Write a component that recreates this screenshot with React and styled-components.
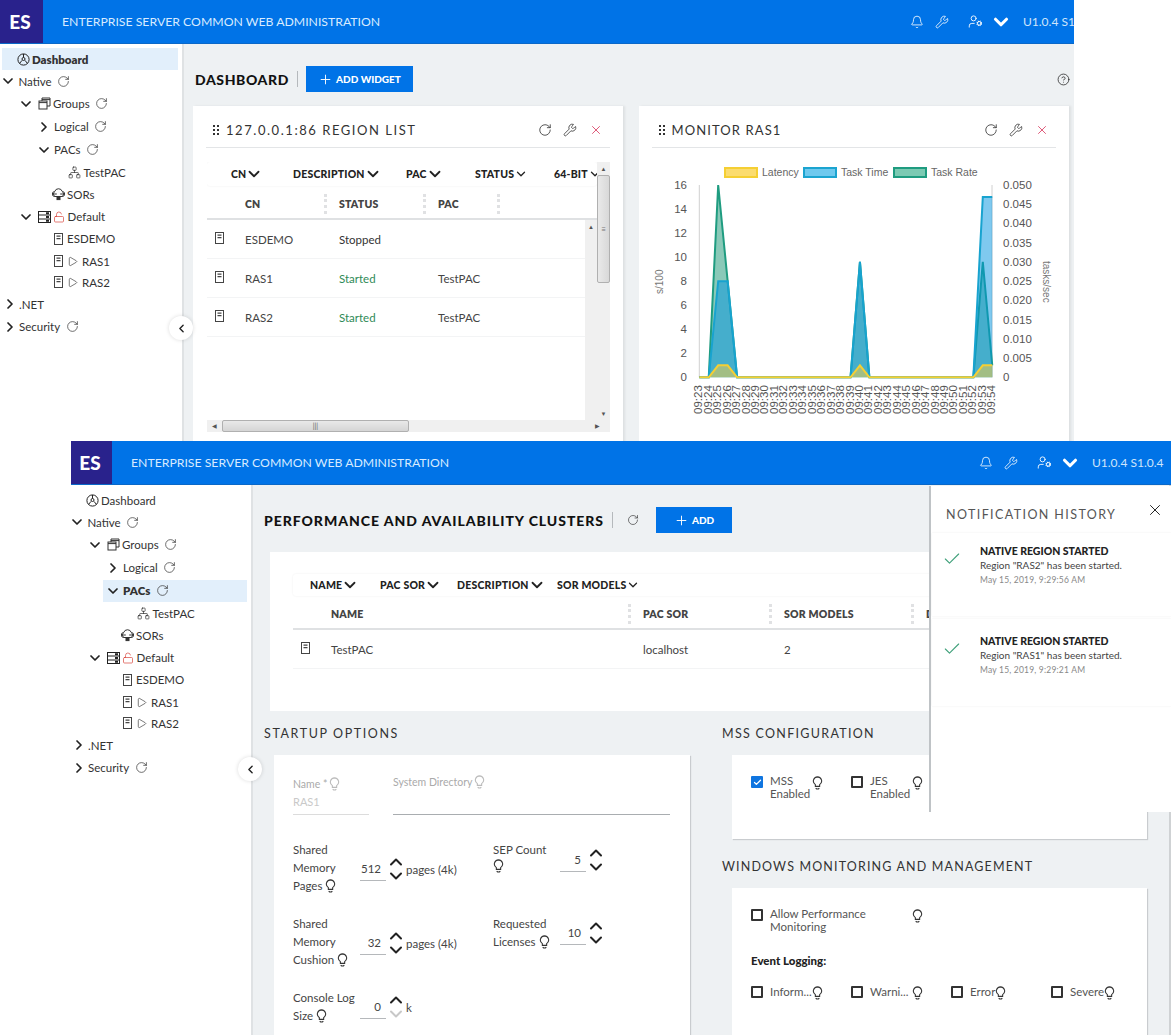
import React from "react";
import styled, { createGlobalStyle } from "styled-components";
import {
  Bell,
  Check,
  ChevronDown,
  ChevronLeft,
  ChevronRight,
  ChevronUp,
  CircleHelp,
  LockOpen,
  Network,
  Play,
  Plus,
  RotateCw,
  UserCog,
  Wrench,
  X
} from "lucide-react";

const GlobalStyle = createGlobalStyle`
  html, body {
    margin: 0;
    background: #fff;
    overflow: hidden;
  }
  body {
    font-family: "Lato", "Open Sans", sans-serif;
    color: #333;
  }
`;

const Page = styled.div`
  width: 1171px;
  height: 1035px;
  overflow: hidden;
`;

const Shot = styled.section`
  width: ${p => p.$width}px;
  height: ${p => p.$height}px;
  margin-left: ${p => p.$left}px;
  overflow: hidden;
  display: flex;
  flex-direction: column;
  position: relative;
`;

const TopBar = styled.header`
  flex: 0 0 44px;
  display: flex;
  align-items: center;
  background: #0073e7;
  border-bottom: 1px solid #0a68c8;
  box-sizing: border-box;
  color: #d8ebff;
  white-space: nowrap;
`;

const Logo = styled.div`
  flex: 0 0 ${p => p.$width}px;
  box-sizing: border-box;
  padding-right: 3px;
  height: 100%;
  display: flex;
  align-items: center;
  justify-content: center;
  background: #29228c;
  color: #fff;
  font-weight: 900;
  font-size: 19px;
`;

const AppTitle = styled.div`
  flex: 0 0 867px;
  box-sizing: border-box;
  padding-left: 19px;
  font-size: 12.25px;
`;

const BarIcons = styled.div`
  display: flex;
  align-items: center;
  color: #fff;
`;

const BarIcon = styled.span`
  display: flex;
  width: ${p => p.$width}px;
`;

const BarChevron = styled(ChevronDown)`
  margin-left: -3px;
  flex: none;
`;

const Version = styled.span`
  font-size: 12px;
  margin-left: 16px;
  color: #cfe5fb;
`;

const Body = styled.div`
  flex: 1;
  display: flex;
  min-height: 0;
  margin-left: ${p => p.$shift || 0}px;
`;

const Sidebar = styled.nav`
  flex: 0 0 184px;
  box-sizing: border-box;
  padding-top: 4px;
  background: #fff;
  border-right: 2px solid #dfe2e4;
  position: relative;
  z-index: 2;
`;

const TreeRow = styled.div`
  height: 22.3px;
  width: ${p => 178 - p.$x}px;
  margin-left: ${p => p.$x}px;
  margin-top: ${p => p.$nudge || 0}px;
  padding-left: ${p => p.$pad || 0}px;
  box-sizing: border-box;
  display: flex;
  align-items: center;
  gap: ${p => p.$gap || 2.5}px;
  font-size: 11.5px;
  color: #333;
  font-weight: ${p => (p.$bold ? 800 : 400)};
  background: ${p => (p.$active ? "#e2effb" : "transparent")};
  svg {
    flex: none;
  }
`;

const Refresh = styled(RotateCw).attrs({ size: 13, strokeWidth: 1.3, color: "#333" })`
  margin-left: 3px;
`;

const TreeDown = styled(ChevronDown).attrs({ size: 16, strokeWidth: 2.6, color: "#222" })`
  margin: 0 ${p => p.$after || 0}px 0 -2px;
`;

const TreeRight = styled(ChevronRight).attrs({ size: 16, strokeWidth: 2.6, color: "#222" })`
  margin: 0 ${p => p.$after || 0}px 0 -2px;
`;

const CollapseButton = styled.button`
  position: absolute;
  left: 169px;
  top: 272px;
  width: 24px;
  height: 24px;
  border: 0;
  padding: 0;
  border-radius: 50%;
  background: #fff;
  box-shadow: 0 0 4px rgba(0, 0, 0, 0.14);
  display: flex;
  align-items: center;
  justify-content: center;
  color: #222;
`;

const Main = styled.main`
  flex: 1;
  min-width: 0;
  box-sizing: border-box;
  background: #eef1f3;
  overflow: hidden;
  padding: 22px 6px 0 ${p => p.$pad}px;
  border-right: ${p => (p.$edge ? "2px solid #cfd2d4" : "0")};
`;

const PageHead = styled.div`
  height: 26px;
  display: flex;
  align-items: center;
  margin-left: ${p => p.$inset || 0}px;
  color: #333;
`;

const PageTitle = styled.h1`
  margin: 0;
  font-size: 14px;
  font-weight: 900;
  letter-spacing: ${p => p.$spacing}px;
  color: #111;
  white-space: nowrap;
`;

const HeadRule = styled.span`
  width: 1px;
  height: 16px;
  background: #b5b9bc;
  margin: 0 8px;
`;

const HeadRefresh = styled(RotateCw).attrs({ size: 12, strokeWidth: 1.3 })`
  margin-left: 6px;
`;

const PrimaryButton = styled.button`
  height: 26px;
  width: ${p => p.$width}px;
  margin-left: ${p => p.$gap || 0}px;
  border: 0;
  padding: 0;
  background: #0073e7;
  color: #fff;
  font-family: inherit;
  font-size: 10px;
  font-weight: 900;
  display: flex;
  align-items: center;
  justify-content: center;
  gap: 3px;
`;

const HelpSpot = styled.span`
  margin-left: auto;
  margin-right: -2px;
  display: flex;
  color: #222;
`;

const WidgetGrid = styled.div`
  display: flex;
  gap: 16px;
  margin-top: 14px;
`;

const Widget = styled.article`
  flex: 0 0 429.5px;
  height: 340px;
  background: #fff;
  box-shadow: 2px 0 2px #dde0e2;
`;

const WidgetHead = styled.div`
  height: 42px;
  margin: 0 13px;
  padding: 6px 7px 0 7px;
  box-sizing: border-box;
  display: flex;
  align-items: center;
  border-bottom: 1px solid #e3e5e7;
`;

const WidgetTitle = styled.h2`
  margin: 0 0 0 7px;
  font-size: 13px;
  font-weight: 400;
  letter-spacing: ${p => p.$spacing}px;
  color: #333;
  white-space: nowrap;
`;

const WidgetTools = styled.div`
  margin-left: auto;
  display: flex;
  align-items: center;
  gap: 11.5px;
  color: #333;
  svg:last-child {
    color: #d8365c;
  }
`;

const TableShell = styled.div`
  margin: 14px 0 0 14px;
  width: 403px;
`;

const TableTop = styled.div`
  display: flex;
`;

const TablePane = styled.div`
  flex: 0 0 390px;
  overflow: hidden;
`;

const Filters = styled.div`
  height: ${p => p.$height}px;
  display: flex;
  align-items: center;
  box-sizing: border-box;
  padding-left: ${p => p.$pad}px;
  border-radius: 3px;
  box-shadow: 0 0 2px rgba(0, 0, 0, 0.08);
  white-space: nowrap;
`;

const Filter = styled.span`
  flex: 0 0 ${p => p.$width}px;
  display: flex;
  align-items: center;
  gap: 2px;
  font-size: 10.5px;
  font-weight: 900;
  color: #222;
  letter-spacing: 0.2px;
`;

const FilterBig = styled(ChevronDown).attrs({ size: 18, strokeWidth: 2.4, color: "#222" })`
  margin: 0 -3px;
  flex: none;
`;

const FilterSmall = styled(ChevronDown).attrs({ size: 14, strokeWidth: 2.2, color: "#222" })`
  margin: 0 -2px;
  flex: none;
`;

const HeadRow = styled.div`
  display: grid;
  grid-template-columns: ${p => p.$cols};
  height: ${p => p.$height}px;
  align-items: center;
  margin-top: ${p => p.$top || 0}px;
  padding-bottom: ${p => p.$lift || 0}px;
  border-bottom: 2px solid #dfe1e3;
  box-sizing: border-box;
  white-space: nowrap;
`;

const HeadCell = styled.div`
  display: flex;
  align-items: center;
  justify-content: space-between;
  padding-right: 12px;
  font-size: 10.5px;
  font-weight: 800;
  color: #444;
  letter-spacing: 0.2px;
`;

const ColGrip = styled.span`
  height: 20px;
  border-left: 3px dotted #e0e1e3;
`;

const RowsArea = styled.div`
  display: flex;
  height: 200px;
`;

const Rows = styled.div`
  flex: 1;
  min-width: 0;
`;

const DataRow = styled.div`
  display: grid;
  grid-template-columns: ${p => p.$cols};
  height: 39px;
  align-items: center;
  border-bottom: 1px solid #f3f4f5;
  box-sizing: border-box;
  font-size: 11.5px;
  color: #444;
  white-space: nowrap;
`;

const RowIcon = styled.span`
  display: flex;
  padding-left: 8px;
  margin-top: -2px;
`;

const Status = styled.span`
  color: ${p => (p.$on ? "#2f8a57" : "#333")};
`;

const VScroll = styled.div`
  flex: 0 0 ${p => p.$width}px;
  display: flex;
  flex-direction: column;
  align-items: center;
  height: ${p => p.$height}px;
  background: #f0f0f0;
  color: #555;
`;

const HScroll = styled.div`
  height: 12px;
  display: flex;
  align-items: center;
  background: #f0f0f0;
  color: #555;
`;

const Arrow = styled.span`
  flex: 0 0 ${p => p.$size || 13}px;
  display: flex;
  align-items: center;
  justify-content: center;
  font-size: 6px;
  line-height: 1;
  margin-top: ${p => (p.$end ? "auto" : "0")};
  margin-left: ${p => (p.$endX ? "auto" : "0")};
`;

const ThumbV = styled.div`
  width: 100%;
  height: ${p => p.$height}px;
  box-sizing: border-box;
  border: 1px solid #b0b0b0;
  border-radius: 2px;
  background: linear-gradient(90deg, #e9e9e9, #d8d8d8);
  display: flex;
  align-items: center;
  justify-content: center;
  font-size: 8px;
  color: #777;
`;

const ThumbH = styled.div`
  width: ${p => p.$width}px;
  height: 100%;
  box-sizing: border-box;
  border: 1px solid #b0b0b0;
  border-radius: 2px;
  background: linear-gradient(#e9e9e9, #d5d5d5);
  display: flex;
  align-items: center;
  justify-content: center;
  font-size: 7px;
  color: #555;
`;

const ChartSvg = styled.svg`
  display: block;
  font-family: "Liberation Sans", Arial, sans-serif;
`;

const ClusterCard = styled.div`
  height: 159px;
  margin: 19px 19px 0 6px;
  padding: 22px 0 0 23px;
  box-sizing: border-box;
  background: #fff;
  overflow: hidden;
`;

const SectionGrid = styled.div`
  display: grid;
  grid-template-columns: 426px 425px;
  column-gap: 32px;
  margin-top: 15px;
`;

const SectionColumn = styled.div`
  min-width: 0;
`;

const SectionTitle = styled.h3`
  margin: ${p => p.$top || 0}px 0 13px;
  height: 16px;
  line-height: 16px;
  font-size: 12.5px;
  font-weight: 400;
  letter-spacing: ${p => p.$spacing}px;
  color: #333;
  white-space: nowrap;
`;

const FormCard = styled.div`
  margin-left: 10px;
  height: ${p => p.$height}px;
  box-sizing: border-box;
  padding: ${p => p.$padTop}px 0 0 19px;
  background: #fff;
  box-shadow: 1px 1px 1px #c9cccf;
`;

const TextRow = styled.div`
  display: flex;
  height: 37px;
  gap: 24px;
`;

const TextField = styled.div`
  width: ${p => p.$width}px;
  height: 100%;
  display: flex;
  flex-direction: column;
  border-bottom: 1px solid ${p => (p.$muted ? "#dcdcdc" : "#a9adb0")};
  box-sizing: border-box;
`;

const FieldLabel = styled.span`
  display: flex;
  align-items: center;
  gap: 2px;
  font-size: 10.5px;
  color: #aaa;
  height: 14px;
  margin-top: ${p => p.$top || 0}px;
  white-space: nowrap;
`;

const FieldValue = styled.span`
  font-size: 11px;
  color: #c9c9c9;
  margin-top: 4px;
`;

const NumGrid = styled.div`
  display: grid;
  grid-template-columns: 200px 1fr;
  grid-auto-rows: 74px;
  margin-top: 26px;
`;

const NumField = styled.div`
  display: flex;
  align-items: flex-start;
`;

const NumLabel = styled.div`
  flex: 0 0 67px;
  font-size: 11.5px;
  line-height: 18px;
  color: #444;
`;

const BulbLine = styled.span`
  display: inline-flex;
  align-items: center;
  gap: 3px;
`;

const NumControl = styled.div`
  display: flex;
  align-items: center;
  height: 28px;
  margin-top: ${p => p.$top}px;
  font-size: 11.5px;
  color: #444;
  white-space: nowrap;
`;

const NumInput = styled.span`
  width: 26px;
  height: 24px;
  line-height: 24px;
  box-sizing: border-box;
  padding-right: 5px;
  text-align: right;
  border-bottom: 1px solid #b5b8bb;
`;

const Spinner = styled.span`
  display: flex;
  flex-direction: column;
  align-items: center;
  margin: 0 3px;
  width: 14px;
  color: #222;
  svg {
    margin: -3px;
    flex: none;
  }
  svg:last-child {
    color: ${p => (p.$floor ? "#c8c8c8" : "#222")};
  }
`;

const CheckGrid = styled.div`
  display: grid;
  grid-template-columns: repeat(4, 100px);
`;

const CheckItem = styled.div`
  display: flex;
  align-items: flex-start;
  grid-column: span ${p => p.$span || 1};
  margin-bottom: ${p => p.$bottom || 0}px;
  font-size: 11.5px;
  line-height: 13px;
  color: #555;
`;

const Box = styled.span`
  flex: 0 0 12px;
  height: 12px;
  box-sizing: border-box;
  border: ${p => (p.$checked ? "0" : "2px solid #333")};
  border-radius: 1px;
  background: ${p => (p.$checked ? "#0f75e0" : "#fff")};
  display: flex;
  align-items: center;
  justify-content: center;
  color: #fff;
  margin-right: 7px;
`;

const CheckText = styled.span`
  flex: 0 0 ${p => p.$width}px;
  margin-top: ${p => p.$raise || -2}px;
  white-space: ${p => (p.$wrap ? "normal" : "nowrap")};
`;

const EventTitle = styled.div`
  font-size: 11.5px;
  font-weight: 900;
  color: #222;
  margin: 0 0 19px;
`;

const Panel = styled.aside`
  position: absolute;
  left: 858px;
  top: 45px;
  width: 242px;
  height: 326px;
  box-sizing: border-box;
  background: #fff;
  border-left: 2px solid #bfc3c6;
  z-index: 3;
`;

const PanelHead = styled.div`
  height: 47px;
  display: flex;
  align-items: center;
  padding: 0 7px 0 15px;
  justify-content: space-between;
  color: #222;
`;

const PanelTitle = styled.h4`
  margin: 10px 0 0;
  font-size: 12.5px;
  font-weight: 400;
  letter-spacing: 1.4px;
  color: #555;
`;

const Notice = styled.div`
  height: ${p => p.$height}px;
  display: flex;
  box-sizing: border-box;
  padding: ${p => p.$padTop}px 0 0 10px;
  margin: 0 0 3px 1px;
  box-shadow: 0 0 2px rgba(0, 0, 0, 0.07);
`;

const NoticeMark = styled.span`
  flex: 0 0 38px;
  color: #3fa07a;
  padding-top: 5px;
`;

const NoticeTitle = styled.div`
  font-size: 10.5px;
  font-weight: 900;
  color: #222;
  line-height: 14px;
`;

const NoticeText = styled.div`
  font-size: 10px;
  color: #444;
  line-height: 14px;
`;

const NoticeDate = styled.div`
  font-size: 8.5px;
  color: #888;
  line-height: 17px;
  letter-spacing: 0.2px;
`;

const Bulb = ({ muted }) => (
  <svg width="11" height="14" viewBox="0 0 10 13" fill="none" stroke={muted ? "#bbb" : "#333"} strokeWidth="1">
    <path d="M5 .8a3.9 3.9 0 0 0-2 7.2v1.6h4V8A3.9 3.9 0 0 0 5 .8zM3.3 11.4c1 .8 2.4.8 3.4 0" />
  </svg>
);

const DashboardIcon = () => (
  <svg width="13" height="13" viewBox="0 0 13 13" fill="none" stroke="#222" strokeWidth="1">
    <circle cx="6.5" cy="6.5" r="5.6" />
    <circle cx="6.5" cy="6" r="1.5" />
    <path d="M6.5 1v3.5M2.5 10.5L5 7.4M10.5 10.5L8 7.4" />
  </svg>
);

const GroupsIcon = () => (
  <svg width="13" height="13" viewBox="0 0 13 13" fill="none" stroke="#333" strokeWidth="1">
    <rect x="1" y="4" width="8" height="8" fill="#fff" />
    <path d="M1 5.6h8M4 4V1h8v8H9M4 2.6h8" />
  </svg>
);

const SorIcon = () => (
  <svg width="13" height="13" viewBox="0 0 13 13" fill="none" stroke="#333" strokeWidth="1">
    <path d="M3 8.5a2.5 2.5 0 0 1-.3-5 4 4 0 0 1 7.6 0 2.5 2.5 0 0 1-.3 5zM.8 6h4M2.5 4.4L.8 6l1.7 1.6M12.2 6h-4M10.5 4.4L12.2 6l-1.7 1.6" />
    <rect x="5" y="9" width="3" height="2.6" fill="#333" />
  </svg>
);

const ServerListIcon = () => (
  <svg width="13" height="12" viewBox="0 0 13 12" fill="none" stroke="#222" strokeWidth="1">
    <rect x=".5" y=".5" width="12" height="11" />
    <path d="M.5 4h12M.5 8h12" />
    <path d="M8 2.2h3M8 6h3M8 9.8h3" strokeWidth="2" />
  </svg>
);

const RegionIcon = () => (
  <svg width="9" height="12" viewBox="0 0 9 12" fill="none" stroke="#444" strokeWidth="1">
    <rect x=".5" y=".5" width="8" height="11" />
    <path d="M2.5 3.2h4M2.5 5.6h4" strokeWidth="1.2" />
  </svg>
);

const Grip = () => (
  <svg width="6" height="10" viewBox="0 0 6 10" fill="#333">
    <rect x="0" y="0" width="2" height="2" />
    <rect x="4" y="0" width="2" height="2" />
    <rect x="0" y="4" width="2" height="2" />
    <rect x="4" y="4" width="2" height="2" />
    <rect x="0" y="8" width="2" height="2" />
    <rect x="4" y="8" width="2" height="2" />
  </svg>
);

const RedLock = () => <LockOpen size={12} strokeWidth={1.4} color="#d8453c" />;
const PlayMark = () => <Play size={11} strokeWidth={1.3} color="#222" />;

const Tree = ({ active }) => (
  <>
    <TreeRow $x={2} $pad={15} $gap={2} $active={active === "Dashboard"} $bold={active === "Dashboard"}>
      <DashboardIcon /> Dashboard
    </TreeRow>
    <TreeRow $x={2}>
      <TreeDown /> Native <Refresh />
    </TreeRow>
    <TreeRow $x={20}>
      <TreeDown $after={1} /> <GroupsIcon /> Groups <Refresh />
    </TreeRow>
    <TreeRow $x={38} $nudge={0.7}>
      <TreeRight $after={-0.5} /> Logical <Refresh />
    </TreeRow>
    <TreeRow $x={34} $pad={4} $nudge={0.7} $active={active === "PACs"} $bold={active === "PACs"}>
      <TreeDown $after={-0.5} /> PACs <Refresh />
    </TreeRow>
    <TreeRow $x={68}>
      <Network size={13} strokeWidth={1.2} color="#222" /> TestPAC
    </TreeRow>
    <TreeRow $x={52} $gap={2}>
      <SorIcon /> SORs
    </TreeRow>
    <TreeRow $x={20}>
      <TreeDown $after={1} /> <ServerListIcon /> <RedLock /> Default
    </TreeRow>
    <TreeRow $x={54} $gap={4}>
      <RegionIcon /> ESDEMO
    </TreeRow>
    <TreeRow $x={54} $gap={4}>
      <RegionIcon /> <PlayMark /> RAS1
    </TreeRow>
    <TreeRow $x={54} $gap={4} $nudge={-1.4}>
      <RegionIcon /> <PlayMark /> RAS2
    </TreeRow>
    <TreeRow $x={4} $gap={3}>
      <TreeRight $after={-2} /> .NET
    </TreeRow>
    <TreeRow $x={4} $gap={3}>
      <TreeRight $after={-2} /> Security <Refresh />
    </TreeRow>
  </>
);

const Header = ({ logoWidth }) => (
  <TopBar>
    <Logo $width={logoWidth}>ES</Logo>
    <AppTitle>ENTERPRISE SERVER COMMON WEB ADMINISTRATION</AppTitle>
    <BarIcons>
      <BarIcon $width={25}>
        <Bell size={14} strokeWidth={1.4} />
      </BarIcon>
      <BarIcon $width={33}>
        <Wrench size={14} strokeWidth={1.4} />
      </BarIcon>
      <BarIcon $width={25}>
        <UserCog size={15} strokeWidth={1.4} />
      </BarIcon>
      <BarIcon $width={14}>
        <BarChevron size={22} strokeWidth={3.4} />
      </BarIcon>
      <Version>U1.0.4 S1.0.4</Version>
    </BarIcons>
  </TopBar>
);

const regionCols = "38px 94px 99px 74px";
const regions = [
  { cn: "ESDEMO", status: "Stopped", pac: "" },
  { cn: "RAS1", status: "Started", pac: "TestPAC" },
  { cn: "RAS2", status: "Started", pac: "TestPAC" }
];

const RegionList = () => (
  <TableShell>
    <TableTop>
      <TablePane>
        <Filters $height={24} $pad={24}>
          <Filter $width={62}>CN <FilterBig /></Filter>
          <Filter $width={113}>DESCRIPTION <FilterBig /></Filter>
          <Filter $width={69}>PAC <FilterBig /></Filter>
          <Filter $width={79}>STATUS <FilterSmall /></Filter>
          <Filter $width={60}>64-BIT <FilterSmall /></Filter>
        </Filters>
        <HeadRow $cols={regionCols} $height={28} $top={6} $lift={2}>
          <span />
          <HeadCell>CN <ColGrip /></HeadCell>
          <HeadCell>STATUS <ColGrip /></HeadCell>
          <HeadCell>PAC <ColGrip /></HeadCell>
        </HeadRow>
        <RowsArea>
          <Rows>
            {regions.map(r => (
              <DataRow key={r.cn} $cols={regionCols}>
                <RowIcon><RegionIcon /></RowIcon>
                <span>{r.cn}</span>
                <Status $on={r.status === "Started"}>{r.status}</Status>
                <span>{r.pac}</span>
              </DataRow>
            ))}
          </Rows>
          <VScroll $width={12} $height={200}>
            <Arrow>▲</Arrow>
          </VScroll>
        </RowsArea>
      </TablePane>
      <VScroll $width={13} $height={258}>
        <Arrow>▲</Arrow>
        <ThumbV $height={108}>≡</ThumbV>
        <Arrow $end>▼</Arrow>
      </VScroll>
    </TableTop>
    <HScroll>
      <Arrow $size={15}>◀</Arrow>
      <ThumbH $width={187}>|||</ThumbH>
      <Arrow $endX $size={26}>▶</Arrow>
    </HScroll>
  </TableShell>
);

const X0 = 699.3;
const XSTEP = 9.45;
const Y0 = 378.3;
const UNIT = 12.02;
const px = i => X0 + i * XSTEP;
const py = v => Y0 - v * UNIT;

const series = peaks =>
  Array.from({ length: 32 }, (_, i) => (peaks[i] === undefined ? 0 : peaks[i]));

const linePoints = values => values.map((v, i) => `${px(i)},${py(v)}`).join(" ");
const areaPoints = values => `${px(0)},${Y0} ${linePoints(values)} ${px(31)},${Y0}`;

const taskRate = series({ 2: 16, 3: 8, 17: 9.6, 30: 9.6, 31: 1 });
const taskTime = series({ 2: 8, 3: 8, 17: 9.6, 30: 15, 31: 15 });
const latency = series({ 2: 1, 3: 1, 17: 1, 30: 1, 31: 1 });

const legend = [
  { x: 724, label: "Latency", stroke: "#f5cf33", fill: "#fbdc6f" },
  { x: 803, label: "Task Time", stroke: "#1ba4d0", fill: "#6fc9ee" },
  { x: 893, label: "Task Rate", stroke: "#1f9c80", fill: "#7ccab3" }
];
const leftTicks = [0, 2, 4, 6, 8, 10, 12, 14, 16];
const rightTicks = ["0", "0.005", "0.010", "0.015", "0.020", "0.025", "0.030", "0.035", "0.040", "0.045", "0.050"];
const times = Array.from({ length: 32 }, (_, i) => `09:${i + 23}`);

const MonitorChart = () => (
  <ChartSvg width="430" height="290" viewBox="639 149 430 290">
    {legend.map(l => (
      <g key={l.label}>
        <rect x={l.x + 1} y="169" width="32" height="9" fill={l.fill} stroke={l.stroke} strokeWidth="2" />
        <text x={l.x + 38} y="176.5" fontSize="10.5" fill="#666">{l.label}</text>
      </g>
    ))}
    <path d={`M${X0} 186V${Y0}M992 186V${Y0}`} stroke="#d0d0d0" strokeWidth="1" />
    <polygon points={areaPoints(taskRate)} fill="rgba(42,157,125,0.55)" />
    <polyline points={linePoints(taskRate)} fill="none" stroke="#1f9c80" strokeWidth="2" />
    <polygon points={areaPoints(taskTime)} fill="rgba(0,147,223,0.5)" />
    <polyline points={linePoints(taskTime)} fill="none" stroke="#18a3cf" strokeWidth="2" />
    <polygon points={areaPoints(latency)} fill="rgba(255,205,60,0.5)" />
    <polyline points={linePoints(latency)} fill="none" stroke="#f5cf33" strokeWidth="2" />
    {leftTicks.map(t => (
      <text key={t} x="687" y={py(t) + 4} textAnchor="end" fontSize="11.5" fill="#555">{t}</text>
    ))}
    {rightTicks.map((t, i) => (
      <text key={t} x="1003" y={Y0 - i * 19.25 + 4} fontSize="11.5" fill="#555">{t}</text>
    ))}
    {times.map((t, i) => (
      <text key={t} transform={`translate(${px(i) + 3} 415) rotate(-90)`} fontSize="11.5" fill="#555">{t}</text>
    ))}
    <text transform="translate(663 295) rotate(-90)" fontSize="10" fill="#777">s/100</text>
    <text transform="translate(1043 262) rotate(90)" fontSize="10" fill="#777">tasks/sec</text>
  </ChartSvg>
);

const WidgetActions = () => (
  <WidgetTools>
    <RotateCw size={14} strokeWidth={1.4} />
    <Wrench size={14} strokeWidth={1.4} />
    <X size={14} strokeWidth={1.4} />
  </WidgetTools>
);

const DashboardShot = () => (
  <Shot $width={1074} $height={441} $left={0}>
    <Header logoWidth={43} />
    <Body>
      <Sidebar>
        <Tree active="Dashboard" />
        <CollapseButton><ChevronLeft size={13} strokeWidth={2.6} /></CollapseButton>
      </Sidebar>
      <Main $pad={9}>
        <PageHead $inset={2}>
          <PageTitle $spacing={0.6}>DASHBOARD</PageTitle>
          <HeadRule />
          <PrimaryButton $width={107}>
            <Plus size={15} strokeWidth={1.5} /> ADD WIDGET
          </PrimaryButton>
          <HelpSpot><CircleHelp size={13} strokeWidth={1.4} /></HelpSpot>
        </PageHead>
        <WidgetGrid>
          <Widget>
            <WidgetHead>
              <Grip />
              <WidgetTitle $spacing={1.55}>127.0.0.1:86 REGION LIST</WidgetTitle>
              <WidgetActions />
            </WidgetHead>
            <RegionList />
          </Widget>
          <Widget>
            <WidgetHead>
              <Grip />
              <WidgetTitle $spacing={1.1}>MONITOR RAS1</WidgetTitle>
              <WidgetActions />
            </WidgetHead>
            <MonitorChart />
          </Widget>
        </WidgetGrid>
      </Main>
    </Body>
  </Shot>
);

const clusterCols = "38px 312px 141px 142px 100px";

const ClusterTable = () => (
  <ClusterCard>
    <Filters $height={22} $pad={17}>
      <Filter $width={70}>NAME <FilterBig /></Filter>
      <Filter $width={77}>PAC SOR <FilterBig /></Filter>
      <Filter $width={100}>DESCRIPTION <FilterBig /></Filter>
      <Filter $width={100}>SOR MODELS <FilterSmall /></Filter>
    </Filters>
    <HeadRow $cols={clusterCols} $height={30} $top={4}>
      <span />
      <HeadCell>NAME <ColGrip /></HeadCell>
      <HeadCell>PAC SOR <ColGrip /></HeadCell>
      <HeadCell>SOR MODELS <ColGrip /></HeadCell>
      <HeadCell>DESCRIPTION</HeadCell>
    </HeadRow>
    <DataRow $cols={clusterCols}>
      <RowIcon><RegionIcon /></RowIcon>
      <span>TestPAC</span>
      <span>localhost</span>
      <span>2</span>
      <span />
    </DataRow>
  </ClusterCard>
);

const Stepper = ({ floor }) => (
  <Spinner $floor={floor}>
    <ChevronUp size={20} strokeWidth={2.4} />
    <ChevronDown size={20} strokeWidth={2.4} />
  </Spinner>
);

const StartupForm = () => (
  <FormCard $height={300} $padTop={23}>
    <TextRow>
      <TextField $width={76} $muted>
        <FieldLabel $top={-1}>Name * <Bulb muted /></FieldLabel>
        <FieldValue>RAS1</FieldValue>
      </TextField>
      <TextField $width={277}>
        <FieldLabel $top={-3}>System Directory <Bulb muted /></FieldLabel>
      </TextField>
    </TextRow>
    <NumGrid>
      <NumField>
        <NumLabel>Shared<br />Memory<br /><BulbLine>Pages <Bulb /></BulbLine></NumLabel>
        <NumControl $top={14}>
          <NumInput>512</NumInput>
          <Stepper />
          pages (4k)
        </NumControl>
      </NumField>
      <NumField>
        <NumLabel>SEP Count<br /><Bulb /></NumLabel>
        <NumControl $top={5}>
          <NumInput>5</NumInput>
          <Stepper />
        </NumControl>
      </NumField>
      <NumField>
        <NumLabel>Shared<br />Memory<br /><BulbLine>Cushion <Bulb /></BulbLine></NumLabel>
        <NumControl $top={14}>
          <NumInput>32</NumInput>
          <Stepper />
          pages (4k)
        </NumControl>
      </NumField>
      <NumField>
        <NumLabel>Requested<br /><BulbLine>Licenses <Bulb /></BulbLine></NumLabel>
        <NumControl $top={4}>
          <NumInput>10</NumInput>
          <Stepper />
        </NumControl>
      </NumField>
      <NumField>
        <NumLabel>Console Log<br /><BulbLine>Size <Bulb /></BulbLine></NumLabel>
        <NumControl $top={4}>
          <NumInput>0</NumInput>
          <Stepper floor />
          k
        </NumControl>
      </NumField>
    </NumGrid>
  </FormCard>
);

const Checkbox = ({ checked }) => (
  <Box $checked={checked}>{checked && <Check size={9} strokeWidth={3.5} />}</Box>
);

const OptionColumns = () => (
  <SectionColumn>
    <SectionTitle $spacing={1.3}>MSS CONFIGURATION</SectionTitle>
    <FormCard $height={84} $padTop={21}>
      <CheckGrid>
        <CheckItem>
          <Checkbox checked />
          <CheckText $width={42} $wrap>MSS Enabled</CheckText>
          <Bulb />
        </CheckItem>
        <CheckItem>
          <Checkbox />
          <CheckText $width={42} $wrap>JES Enabled</CheckText>
          <Bulb />
        </CheckItem>
      </CheckGrid>
    </FormCard>
    <SectionTitle $top={20} $spacing={1.15}>WINDOWS MONITORING AND MANAGEMENT</SectionTitle>
    <FormCard $height={200} $padTop={21}>
      <CheckGrid>
        <CheckItem $span={2} $bottom={21}>
          <Checkbox />
          <CheckText $width={142}>Allow Performance<br />Monitoring</CheckText>
          <Bulb />
        </CheckItem>
      </CheckGrid>
      <EventTitle>Event Logging:</EventTitle>
      <CheckGrid>
        <CheckItem>
          <Checkbox />
          <CheckText $width={42} $raise={-1}>Inform...</CheckText>
          <Bulb />
        </CheckItem>
        <CheckItem>
          <Checkbox />
          <CheckText $width={42} $raise={-1}>Warni...</CheckText>
          <Bulb />
        </CheckItem>
        <CheckItem>
          <Checkbox />
          <CheckText $width={22} $raise={-1}>Error</CheckText>
          <Bulb />
        </CheckItem>
        <CheckItem>
          <Checkbox />
          <CheckText $width={34} $raise={-1}>Severe</CheckText>
          <Bulb />
        </CheckItem>
      </CheckGrid>
    </FormCard>
  </SectionColumn>
);

const notices = [
  { region: "RAS2", date: "May 15, 2019, 9:29:56 AM", height: 83, padTop: 11 },
  { region: "RAS1", date: "May 15, 2019, 9:29:21 AM", height: 87, padTop: 15 }
];

const NotificationPanel = () => (
  <Panel>
    <PanelHead>
      <PanelTitle>NOTIFICATION HISTORY</PanelTitle>
      <X size={18} strokeWidth={1.3} />
    </PanelHead>
    {notices.map(n => (
      <Notice key={n.region} $height={n.height} $padTop={n.padTop}>
        <NoticeMark><Check size={20} strokeWidth={1.3} /></NoticeMark>
        <div>
          <NoticeTitle>NATIVE REGION STARTED</NoticeTitle>
          <NoticeText>Region "{n.region}" has been started.</NoticeText>
          <NoticeDate>{n.date}</NoticeDate>
        </div>
      </Notice>
    ))}
  </Panel>
);

const ClustersShot = () => (
  <Shot $width={1100} $height={594} $left={71}>
    <Header logoWidth={41} />
    <Body $shift={-2}>
      <Sidebar>
        <Tree active="PACs" />
        <CollapseButton><ChevronLeft size={13} strokeWidth={2.6} /></CollapseButton>
      </Sidebar>
      <Main $pad={11} $edge>
        <PageHead>
          <PageTitle $spacing={0.95}>PERFORMANCE AND AVAILABILITY CLUSTERS</PageTitle>
          <HeadRule />
          <HeadRefresh />
          <PrimaryButton $width={76} $gap={17}>
            <Plus size={15} strokeWidth={1.5} /> ADD
          </PrimaryButton>
        </PageHead>
        <ClusterTable />
        <SectionGrid>
          <SectionColumn>
            <SectionTitle $spacing={1.6}>STARTUP OPTIONS</SectionTitle>
            <StartupForm />
          </SectionColumn>
          <OptionColumns />
        </SectionGrid>
      </Main>
    </Body>
    <NotificationPanel />
  </Shot>
);

export default function App() {
  return (
    <Page>
      <GlobalStyle />
      <DashboardShot />
      <ClustersShot />
    </Page>
  );
}
